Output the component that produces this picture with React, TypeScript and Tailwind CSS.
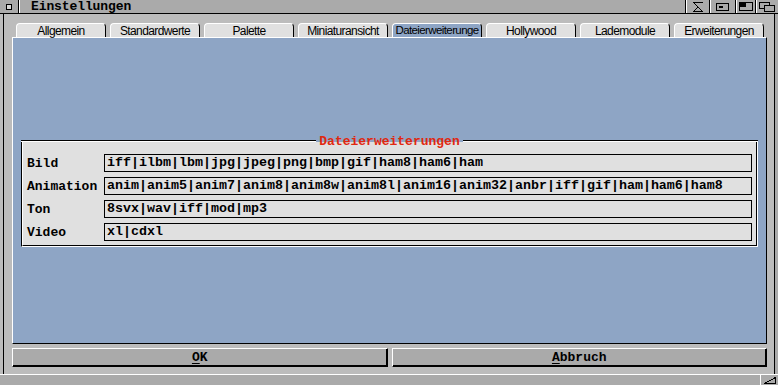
import React from "react";

const tabs = [
  "Allgemein",
  "Standardwerte",
  "Palette",
  "Miniaturansicht",
  "Dateierweiterunge",
  "Hollywood",
  "Lademodule",
  "Erweiterungen",
];
const activeTab = 4;

const fields = [
  { label: "Bild", value: "iff|ilbm|lbm|jpg|jpeg|png|bmp|gif|ham8|ham6|ham" },
  {
    label: "Animation",
    value:
      "anim|anim5|anim7|anim8|anim8w|anim8l|anim16|anim32|anbr|iff|gif|ham|ham6|ham8",
  },
  { label: "Ton", value: "8svx|wav|iff|mod|mp3" },
  { label: "Video", value: "xl|cdxl" },
];

const mono = "font-['Liberation_Mono',monospace] font-bold";

const Gadget = ({ w, children }: { w: string; children: React.ReactNode }) => (
  <div className={`${w} flex items-center justify-center border-l border-black shadow-[inset_1px_0_0_#fff]`}>
    {children}
  </div>
);

const Tab = ({ label, active }: { label: string; active: boolean }) => (
  <div
    className={`relative flex h-[14px] w-[90px] items-center justify-center rounded-t-[4px] border-l border-t border-r border-l-white border-t-white border-r-black font-['Liberation_Sans',sans-serif] leading-none text-black ${
      active ? "bg-[#8ea5c5] text-[11.5px] tracking-[-0.6px]" : "bg-[#e0e0e0] text-[12px] tracking-[-0.6px]"
    }`}
  >
    <span className="whitespace-nowrap">{label}</span>
  </div>
);

const Button = ({ label }: { label: string }) => (
  <button className="flex h-[19px] flex-1 items-center justify-center border border-t-white border-l-white border-r-black border-b-black bg-[#aaaaaa] shadow-[inset_-1px_-1px_0_#000]">
    <span className={`${mono} text-[13px] leading-none text-black`}>
      <span className="underline underline-offset-2">{label[0]}</span>
      {label.slice(1)}
    </span>
  </button>
);

const App = () => {
  return (
    <div className="flex h-[385px] w-[778px] flex-col overflow-hidden bg-[#aaaaaa]">
      {/* title bar */}
      <div className="flex h-[13px] bg-[#aaaaaa]">
        <div className="flex w-[18px] items-center justify-center">
          <div className="h-[6px] w-[6px] border border-black bg-[#d8d8d8]" />
        </div>
        <div className="w-px bg-black" />
        <div className="w-px bg-white" />
        <div className={`${mono} flex-1 pl-[11px] text-[13px] leading-[13px] tracking-[-0.1px] text-black`}>
          Einstellungen
        </div>
        <Gadget w="w-[24px]">
          <svg width="12" height="10" viewBox="0 0 12 10" shapeRendering="crispEdges">
            <path d="M1 0.5H11M2 1L6 5L2 9M1 9.5H11M10 9L6 5" stroke="#000" fill="none" />
          </svg>
        </Gadget>
        <Gadget w="w-[26px]">
          <svg width="13" height="8" viewBox="0 0 13 8" shapeRendering="crispEdges">
            <rect x="0.5" y="0.5" width="12" height="7" stroke="#000" fill="none" />
            <rect x="3" y="3" width="4" height="2" fill="#000" />
          </svg>
        </Gadget>
        <Gadget w="w-[20px]">
          <svg width="14" height="9" viewBox="0 0 14 9" shapeRendering="crispEdges">
            <rect x="0.5" y="0.5" width="13" height="8" stroke="#000" fill="none" />
            <rect x="1" y="1" width="6" height="4" fill="#000" />
          </svg>
        </Gadget>
        <Gadget w="w-[23px]">
          <svg width="16" height="10" viewBox="0 0 16 10" shapeRendering="crispEdges">
            <rect x="0.5" y="0.5" width="10" height="6" stroke="#000" fill="none" />
            <rect x="5.5" y="3.5" width="10" height="6" stroke="#000" fill="#aaaaaa" />
          </svg>
        </Gadget>
      </div>
      <div className="h-px bg-black" />

      {/* window body */}
      <div className="flex flex-1">
        <div className="w-[3px] bg-[#bcbcbc]" />
        <div className="w-px bg-black" />
        <div className="flex flex-1 flex-col bg-[#bcbcbc] pl-[8px] pr-[7px] pt-[9px]">
          <div className="flex gap-[4px] pl-[4px]">
            {tabs.map((t, i) => (
              <Tab key={t} label={t} active={i === activeTab} />
            ))}
          </div>

          <div className="h-[307px] border-l border-t border-r border-b border-l-white border-t-white border-r-black border-b-black bg-[#8ea5c5] pl-[8px] pr-[8px] pt-[102px]">
            <div className="flex h-[107px] flex-col">
              <div className="relative z-10 flex h-[2px] items-center">
                <div className="h-[2px] flex-1 border-t border-b border-t-black border-b-white" />
                <span className={`${mono} px-[3px] text-[13px] leading-none text-[#e02810]`}>
                  Dateierweiterungen
                </span>
                <div className="h-[2px] flex-1 border-t border-b border-t-black border-b-white" />
              </div>
              <div className="flex-1 border-b border-l border-r border-b-white border-l-black border-r-white">
                <div className="flex h-full flex-col gap-[5px] border-b border-l border-r border-b-black border-l-white border-r-black bg-[#e0e0e0] pb-[4px] pl-[4px] pr-[4px] pt-[12px]">
                  {fields.map((f) => (
                    <div key={f.label} className="flex h-[18px] items-center">
                      <div className={`${mono} w-[77px] text-[13px] leading-none text-black`}>{f.label}</div>
                      <div className="flex h-[18px] flex-1 items-center border border-black bg-[#e0e0e0] pl-[2px]">
                        <span className={`${mono} whitespace-nowrap text-[13.33px] leading-none text-black`}>
                          {f.value}
                        </span>
                      </div>
                    </div>
                  ))}
                </div>
              </div>
            </div>
          </div>

          <div className="mt-[4px] flex gap-[4px]">
            <Button label="OK" />
            <Button label="Abbruch" />
          </div>
        </div>
        <div className="w-px bg-black" />
        <div className="w-[3px] bg-[#aaaaaa]" />
      </div>

      {/* bottom border */}
      <div className="h-px bg-white" />
      <div className="flex h-[10px] justify-end bg-[#aaaaaa]">
        <div className="flex w-[18px] items-center justify-center border-l border-white">
          <svg width="12" height="7" viewBox="0 0 12 7" shapeRendering="crispEdges">
            <path d="M0.5 6.5H11.5V0.5Z" stroke="#000" fill="none" />
          </svg>
        </div>
      </div>
    </div>
  );
};

export default App;
